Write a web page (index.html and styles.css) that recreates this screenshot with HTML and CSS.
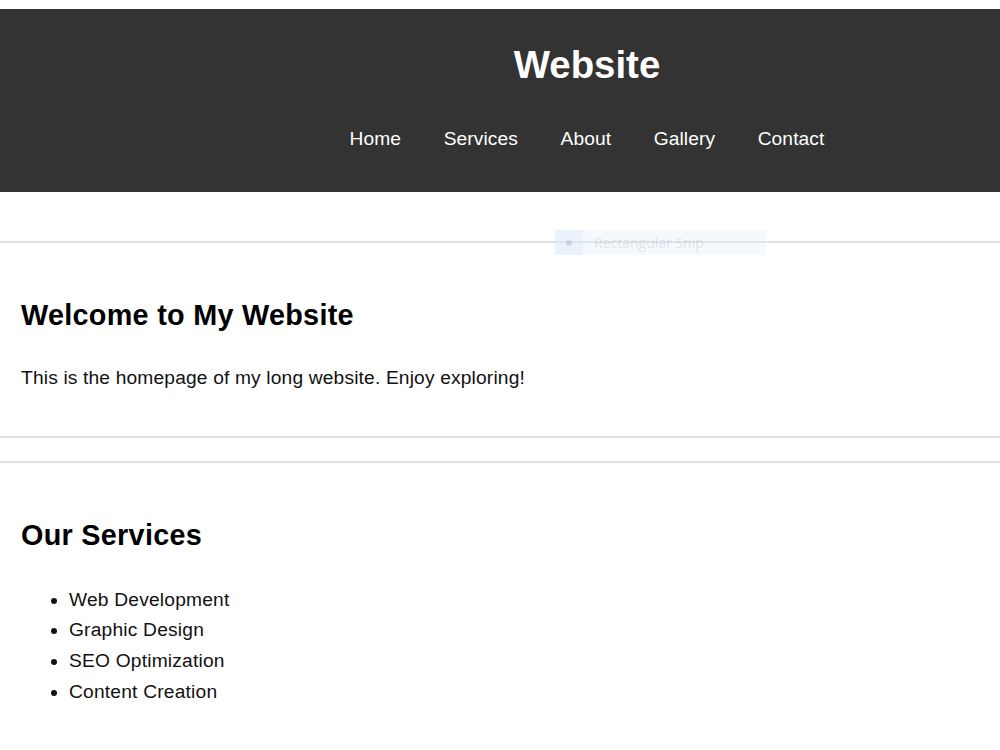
FILE: index.html
```html
<!DOCTYPE html>
<html lang="en">
<head>
<meta charset="utf-8">
<title>Website</title>
<link rel="stylesheet" href="styles.css">
</head>
<body>
<header class="site-header">
  <div class="header-inner">
    <h1 class="site-title">Website</h1>
    <nav class="site-nav">
      <ul class="nav-list">
        <li><a href="#" class="nav-link">Home</a></li>
        <li><a href="#" class="nav-link">Services</a></li>
        <li><a href="#" class="nav-link">About</a></li>
        <li><a href="#" class="nav-link">Gallery</a></li>
        <li><a href="#" class="nav-link">Contact</a></li>
      </ul>
    </nav>
  </div>
</header>
<main class="content">
  <section class="section section-home">
    <h2 class="section-title">Welcome to My Website</h2>
    <p class="section-text">This is the homepage of my long website. Enjoy exploring!</p>
  </section>
  <section class="section section-services">
    <h2 class="section-title">Our Services</h2>
    <ul class="service-list">
      <li>Web Development</li>
      <li>Graphic Design</li>
      <li>SEO Optimization</li>
      <li>Content Creation</li>
    </ul>
  </section>
</main>
<div class="snip-hint"><span class="snip-icon"></span><span class="snip-label">Rectangular Snip</span></div>
</body>
</html>
```

FILE: styles.css
```css
html, body {
  margin: 0;
  padding: 0;
}

body {
  padding-top: 9px;
  font-family: "Liberation Sans", Arial, sans-serif;
  color: #111;
  background: #fff;
  position: relative;
}

.site-header {
  background: #333;
  color: #fff;
  padding: 34px 0 42px;
}

.header-inner {
  margin-left: 174px;
}

.site-title {
  margin: 0;
  font-size: 38.4px;
  line-height: 44px;
  font-weight: bold;
  text-align: center;
}

.site-nav {
  margin-top: 41px;
}

.nav-list {
  list-style: none;
  margin: 0;
  padding: 0;
  display: flex;
  justify-content: center;
  gap: 42.5px;
}

.nav-link {
  color: #fff;
  text-decoration: none;
  font-size: 19.2px;
  line-height: 22px;
  letter-spacing: 0.1px;
  display: block;
}

.section {
  padding: 0 21px;
}

.section-home {
  margin-top: 49px;
  border-top: 2px solid #e0e0e0;
  border-bottom: 2px solid #e0e0e0;
  padding-top: 55px;
  padding-bottom: 42px;
}

.section-services {
  margin-top: 23px;
  border-top: 2px solid #e0e0e0;
  padding-top: 55px;
  padding-bottom: 40px;
}

.section-title {
  margin: 0;
  font-size: 28.8px;
  line-height: 34px;
  font-weight: bold;
  letter-spacing: 0.28px;
  color: #000;
}

.section-text {
  margin: 31px 0 0;
  font-size: 19.2px;
  line-height: 30.72px;
  letter-spacing: 0.16px;
}

.service-list {
  margin: 33px 0 0;
  padding-left: 48px;
  font-size: 19.2px;
  line-height: 30.72px;
  letter-spacing: 0.2px;
}

.snip-hint {
  position: absolute;
  left: 555px;
  top: 230px;
  width: 211px;
  height: 25px;
  display: flex;
  align-items: center;
  background: rgba(225, 238, 252, 0.35);
  font-family: "Open Sans", "Noto Sans", sans-serif;
  font-size: 14px;
  color: rgba(0, 0, 0, 0.11);
}

.snip-icon {
  width: 28px;
  height: 25px;
  background: rgba(215, 230, 248, 0.35);
  display: flex;
  align-items: center;
  justify-content: center;
  margin-right: 11px;
}

.snip-icon::before {
  content: "";
  width: 6px;
  height: 6px;
  border-radius: 50%;
  background: rgba(0, 0, 0, 0.1);
}

.snip-label {
  white-space: nowrap;
}
```
